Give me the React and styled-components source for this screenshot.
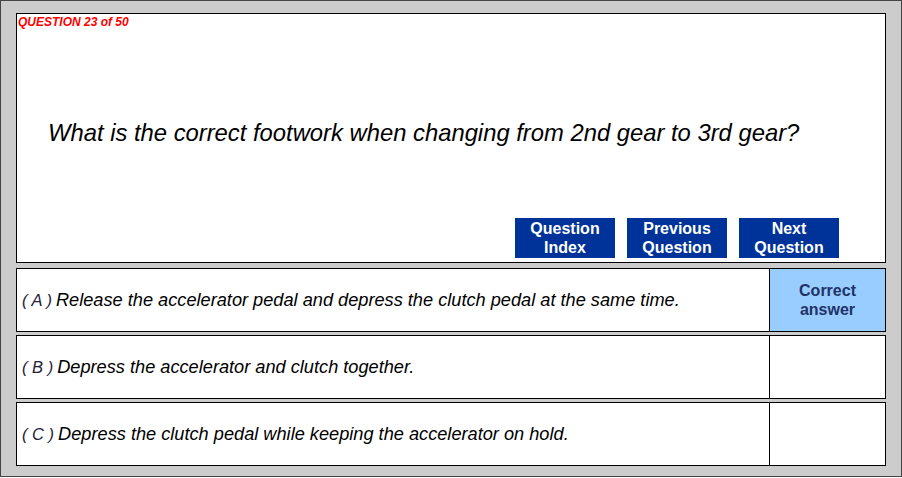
import React from 'react';
import styled, { createGlobalStyle } from 'styled-components';

const GlobalStyle = createGlobalStyle`
  html, body {
    margin: 0;
    padding: 0;
    background: #ffffff;
  }
  * {
    box-sizing: border-box;
  }
`;

const Frame = styled.div`
  width: 902px;
  height: 477px;
  background-color: #cccccc;
  border: 1px solid #444444;
  padding: 12px 15px 0 15px;
  display: flex;
  flex-direction: column;
  font-family: "Liberation Sans", Arial, sans-serif;
`;

const QuestionBox = styled.div`
  height: 250px;
  background-color: #ffffff;
  border: 1px solid #000000;
  display: flex;
  flex-direction: column;
  margin-bottom: 5px;
`;

const Counter = styled.div`
  color: #ff0000;
  font-size: 12px;
  font-weight: bold;
  font-style: italic;
  line-height: 14px;
  padding: 1px 0 0 1px;
`;

const QuestionText = styled.div`
  flex-grow: 1;
  font-size: 23.8px;
  font-style: italic;
  color: #000000;
  line-height: 28px;
  padding: 90px 0 0 31px;
`;

const Nav = styled.div`
  display: flex;
  justify-content: flex-end;
  gap: 12px;
  padding: 0 46px 4px 0;
`;

const NavButton = styled.button`
  width: 100px;
  height: 40px;
  border: none;
  background-color: #003399;
  color: #ffffff;
  font-family: "Liberation Sans", Arial, sans-serif;
  font-size: 16px;
  font-weight: bold;
  line-height: 19px;
  padding: 0;
  cursor: pointer;
`;

const Answers = styled.div`
  display: flex;
  flex-direction: column;
  gap: 3px;
`;

const AnswerRow = styled.div`
  height: 64px;
  background-color: #ffffff;
  border: 1px solid #000000;
  display: grid;
  grid-template-columns: 1fr 116px;
`;

const AnswerText = styled.div`
  display: flex;
  align-items: center;
  padding-left: 5px;
  font-size: 18.2px;
  font-style: italic;
  color: #000000;
`;

const Letter = styled.span`
  color: #222238;
  font-size: 16.5px;
  margin-right: 4px;
`;

const Result = styled.div`
  border-left: 1px solid #000000;
  background-color: ${({ $correct }) => ($correct ? '#99ccff' : '#ffffff')};
  color: #1f3366;
  font-size: 16px;
  font-weight: bold;
  line-height: 19px;
  display: flex;
  align-items: center;
  justify-content: center;
  text-align: center;
`;

const answers = [
  { letter: 'A', text: 'Release the accelerator pedal and depress the clutch pedal at the same time.', correct: true },
  { letter: 'B', text: 'Depress the accelerator and clutch together.' },
  { letter: 'C', text: 'Depress the clutch pedal while keeping the accelerator on hold.' },
];

const App = () => {
  return (
    <>
      <GlobalStyle />
      <Frame>
        <QuestionBox>
          <Counter>QUESTION 23 of 50</Counter>
          <QuestionText>What is the correct footwork when changing from 2nd gear to 3rd gear?</QuestionText>
          <Nav>
            <NavButton>Question<br />Index</NavButton>
            <NavButton>Previous<br />Question</NavButton>
            <NavButton>Next<br />Question</NavButton>
          </Nav>
        </QuestionBox>
        <Answers>
          {answers.map((a) => (
            <AnswerRow key={a.letter}>
              <AnswerText>
                <Letter>( {a.letter} )</Letter>
                {a.text}
              </AnswerText>
              <Result $correct={a.correct}>
                {a.correct && <span>Correct<br />answer</span>}
              </Result>
            </AnswerRow>
          ))}
        </Answers>
      </Frame>
    </>
  );
};

export default App;
